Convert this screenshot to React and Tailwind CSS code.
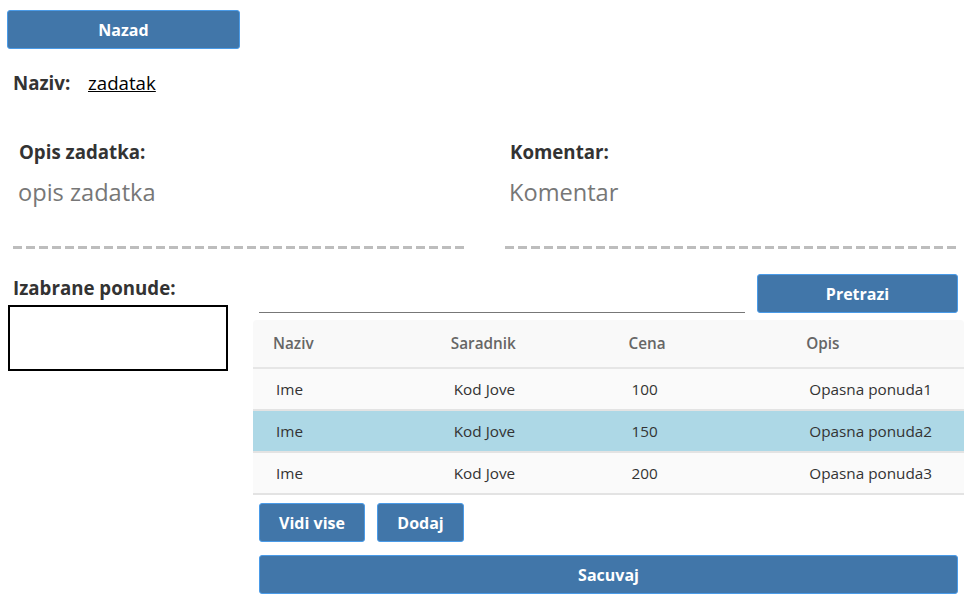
const rows = [
  { naziv: 'Ime', saradnik: 'Kod Jove', cena: 100, opis: 'Opasna ponuda1' },
  { naziv: 'Ime', saradnik: 'Kod Jove', cena: 150, opis: 'Opasna ponuda2', selected: true },
  { naziv: 'Ime', saradnik: 'Kod Jove', cena: 200, opis: 'Opasna ponuda3' },
]

const btn = 'bg-[#4176a9] border border-[#4a9be8] rounded-[3px] text-white font-bold text-[16px] h-[39px]'

function Dashed() {
  return <div className="h-[3px] mt-[38px] bg-[repeating-linear-gradient(90deg,#bdbdbd_0px,#bdbdbd_9px,transparent_9px,transparent_13px)]" />
}

export default function App() {
  return (
    <div className="w-[974px] h-[598px] bg-white text-[#333] font-['Open_Sans',sans-serif] overflow-hidden">
      <div className="pt-[10px] pl-[7px]">
        <button className={`${btn} w-[233px]`}>Nazad</button>
      </div>

      <div className="flex items-baseline pl-[13px] mt-[21px] text-[18.7px] leading-[26px]">
        <span className="font-bold w-[75px]">Naziv:</span>
        <span className="underline text-black">zadatak</span>
      </div>

      <div className="flex gap-[38px] pl-[13px] mt-[43px]">
        <div className="w-[454px]">
          <div className="font-bold text-[18.7px] leading-[26px] pl-[6px]">Opis zadatka:</div>
          <div className="text-[23.6px] leading-[32px] text-[#777] pl-[5px] mt-[11px]">opis zadatka</div>
          <Dashed />
        </div>
        <div className="w-[453px]">
          <div className="font-bold text-[18.7px] leading-[26px] pl-[5px]">Komentar:</div>
          <div className="text-[23.6px] leading-[32px] text-[#777] pl-[4px] mt-[11px]">Komentar</div>
          <Dashed />
        </div>
      </div>

      <div className="flex mt-[25px]">
        <div className="w-[253px] pl-[8px] pt-[1px]">
          <div className="font-bold text-[18.7px] leading-[26px] pl-[5px]">Izabrane ponude:</div>
          <div className="w-[220px] h-[66px] border-2 border-black mt-[4px]" />
        </div>
        <div className="w-[711px]">
          <div className="flex items-end h-[39px]">
            <input className="ml-[6px] w-[486px] border-b border-[#777] outline-none h-[26px]" />
            <button className={`${btn} ml-[12px] w-[201px]`}>Pretrazi</button>
          </div>
          <table className="w-full mt-[7px] text-[15.3px] border-collapse table-fixed">
            <thead>
              <tr className="bg-[#f9f9f9] border-b-2 border-[#e6e6e6] h-[48px]">
                <th className="text-left font-semibold text-[#666] pl-[20px] rounded-tl-[4px]">Naziv</th>
                <th className="text-left font-semibold text-[#666] pl-[20px]">Saradnik</th>
                <th className="text-left font-semibold text-[#666] pl-[20px]">Cena</th>
                <th className="text-left font-semibold text-[#666] pl-[20px] rounded-tr-[4px]">Opis</th>
              </tr>
            </thead>
            <tbody>
              {rows.map((r, i) => (
                <tr key={i} className={`${r.selected ? 'bg-[#add8e6]' : 'bg-[#fafafa]'} border-b-2 border-[#e3e3e3] h-[42px]`}>
                  <td className="pl-[23px]">{r.naziv}</td>
                  <td className="pl-[23px]">{r.saradnik}</td>
                  <td className="pl-[23px]">{r.cena}</td>
                  <td className="pl-[23px]">{r.opis}</td>
                </tr>
              ))}
            </tbody>
          </table>
          <div className="flex gap-[12px] pl-[6px] mt-[8px]">
            <button className={`${btn} w-[106px]`}>Vidi vise</button>
            <button className={`${btn} w-[87px]`}>Dodaj</button>
          </div>
          <div className="pl-[6px] mt-[13px]">
            <button className={`${btn} w-[699px]`}>Sacuvaj</button>
          </div>
        </div>
      </div>
    </div>
  )
}
